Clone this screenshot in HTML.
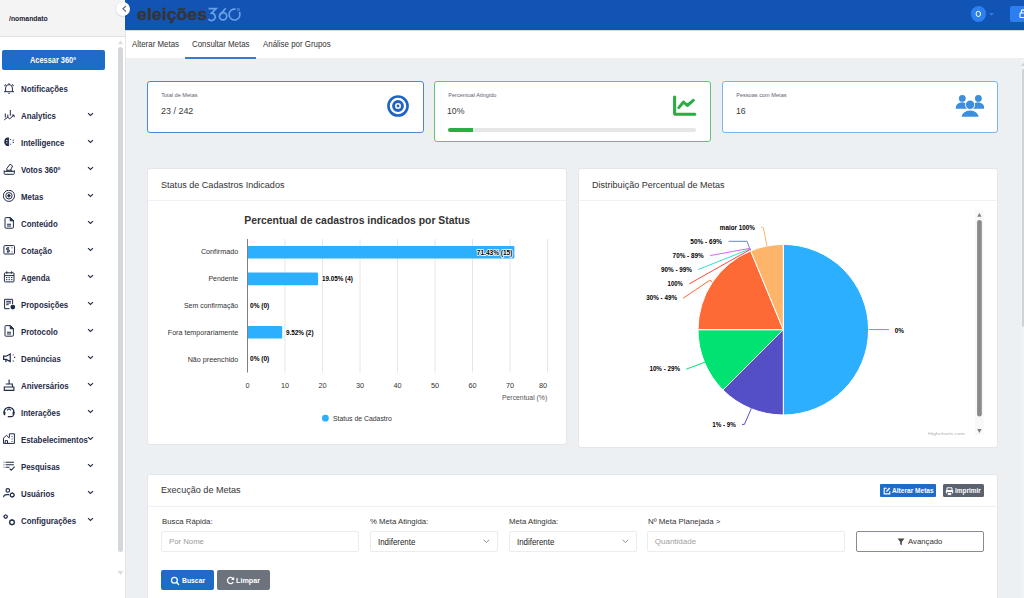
<!DOCTYPE html>
<html><head><meta charset="utf-8">
<style>
*{box-sizing:border-box;margin:0;padding:0}
html,body{width:1024px;height:598px;overflow:hidden;font-family:"Liberation Sans",sans-serif;background:#edf0f3;position:relative}
.abs{position:absolute}
.sx{display:inline-block;transform-origin:0 50%;white-space:nowrap}
#side{left:0;top:0;width:125px;height:598px;background:#fff}
#sidehead{left:0;top:0;width:125px;height:37px;background:#f4f4f4;border-bottom:1px solid #e0e0e0}
#btn360{left:2px;top:50px;width:103px;height:20px;background:#1f6bc8;border-radius:2px;color:#fff;font-size:8.5px;font-weight:bold;line-height:20px}
.mi{position:absolute;left:0;width:110px;height:14px}
.mi svg.ic{position:absolute;left:3px;top:1px}
.mi .t{position:absolute;left:21.2px;top:1.5px;font-size:8.6px;font-weight:bold;color:#1f2b47;line-height:12px}
.mi svg.ch{position:absolute;left:87px;top:4px}
#sscroll{left:118px;top:47px;width:5px;height:505px;background:#d6d7db;border-radius:2.5px}
#collapse{left:116.35px;top:2.35px;width:14px;height:14px;border-radius:50%;background:#fff;box-shadow:0 0.6px 1.5px rgba(0,0,0,.22)}
#top{left:125px;top:0;width:899px;height:30px;background:#1154b4}
#tabs{left:125px;top:30px;width:899px;height:28px;background:#fff}
.tab{position:absolute;top:7.55px;font-size:8.6px;color:#333;line-height:12px}
.card{position:absolute;background:#fff;border-radius:3px}
.kpi-l{position:absolute;left:13.2px;top:10px;font-size:5.6px;color:#5d6370}
.kpi-v{position:absolute;left:13.5px;top:22.9px;font-size:9.7px;color:#3a3a3a}
.ch-title{position:absolute;left:12.6px;top:9.5px;font-size:9.6px;color:#333;line-height:12px}
.lbl{font-size:7.8px;color:#333;position:absolute;line-height:10px}
.inp{position:absolute;background:#fff;border:1px solid #eaecef;border-radius:2px}
.fl{position:absolute;font-size:8px;color:#333;line-height:10px}
</style></head><body>
<div id="side" class="abs"></div>
<div id="sidehead" class="abs"><span class="abs sx" style="left:9.2px;top:13.6px;font-size:7.6px;font-weight:bold;color:#1f2433;line-height:10px;transform:scaleX(.9)">/nomandato</span></div>
<div id="btn360" class="abs"><span class="abs sx" style="left:27.8px;top:0;transform:scaleX(.87)">Acessar 360º</span></div>
<div id="sscroll" class="abs"></div>
<svg class="abs" style="left:117px;top:39.5px" width="7" height="6"><path d="M3.5 0.6 L6.2 4.2 L0.8 4.2Z" fill="#dcdde0"/></svg>
<svg class="abs" style="left:117px;top:570px" width="7" height="6"><path d="M3.5 5 L6.5 1 L0.5 1Z" fill="#dcdde0"/></svg>

<!-- menu -->
<div id="menu">
<div class="mi" style="top:81.3px"><svg class="ic" width="13" height="13" fill="none" stroke="#1f2b47" stroke-width="1"><path d="M2.6 9.6V6a3.4 3.4 0 0 1 6.8 0v3.6M1 9.7h10M5.2 11.3h1.6" /><path d="M1.6 4.2 2.6 2.2M10.4 4.2 9.4 2.2M6 1.2v1.2"/></svg><span class="t sx" style="transform:scaleX(.915)">Notificações</span></div>
<div class="mi" style="top:108.3px"><svg class="ic" width="13" height="13" fill="none" stroke="#1f2b47" stroke-width="1"><path d="M2.3 4.5v4M4.8 5.6v3.3M7.3 1v5.6M1.2 11l3.4-2.8 2.1 1.6 4-3.5M8.8 6.1h2.3v2.2"/></svg><span class="t sx" style="transform:scaleX(.915)">Analytics</span><svg class="ch" width="7" height="5"><path d="M1 1.2l2.5 2.3 2.5-2.3" fill="none" stroke="#1f2b47" stroke-width="1.1"/></svg></div>
<div class="mi" style="top:135.3px"><svg class="ic" width="13" height="13" fill="none" stroke="#1f2b47" stroke-width="1"><path d="M5 1.5C2.6 1.5 1.2 3.3 1.4 5.2c-.3 1.2-.1 2.6 1 3.5.3 1 1.4 1.4 2.6 1.2z" fill="#1f2b47" stroke="none"/><path d="M5.6 1.5v8.6M7.6 3v.8M7.6 7.8v.8M9.6 4.2h1.3M9.6 6.4h1.3"/><path d="M3 4.5h1.6M3 6.8h1.6" stroke="#fff" stroke-width="0.8"/></svg><span class="t sx" style="transform:scaleX(.915)">Intelligence</span><svg class="ch" width="7" height="5"><path d="M1 1.2l2.5 2.3 2.5-2.3" fill="none" stroke="#1f2b47" stroke-width="1.1"/></svg></div>
<div class="mi" style="top:162.3px"><svg class="ic" width="13" height="13" fill="none" stroke="#1f2b47" stroke-width="1"><path d="M1.2 7.3v3.2a.8.8 0 0 0 .8.8h8.5a.8.8 0 0 0 .8-.8V7.3M1.2 8.4h10.1M3.2 7.3h6.1"/><path d="M4.3 7.2 3.6 5.8 7.1 1.1 9.6 3 7.4 7.2"/></svg><span class="t sx" style="transform:scaleX(.915)">Votos 360º</span><svg class="ch" width="7" height="5"><path d="M1 1.2l2.5 2.3 2.5-2.3" fill="none" stroke="#1f2b47" stroke-width="1.1"/></svg></div>
<div class="mi" style="top:189.3px"><svg class="ic" width="13" height="13" fill="none" stroke="#1f2b47" stroke-width="1"><circle cx="5.9" cy="5.8" r="5.6"/><circle cx="5.9" cy="5.8" r="3.2"/><circle cx="5.9" cy="5.8" r="1.2" fill="#1f2b47"/></svg><span class="t sx" style="transform:scaleX(.915)">Metas</span><svg class="ch" width="7" height="5"><path d="M1 1.2l2.5 2.3 2.5-2.3" fill="none" stroke="#1f2b47" stroke-width="1.1"/></svg></div>
<div class="mi" style="top:216.3px"><svg class="ic" width="13" height="13" fill="none" stroke="#1f2b47" stroke-width="1"><path d="M2.8.6h4.6l3 3v6.8a.8.8 0 0 1-.8.8H2.8a.8.8 0 0 1-.8-.8V1.4a.8.8 0 0 1 .8-.8z"/><path d="M7.2.6v3.2h3.2z" fill="#1f2b47"/><path d="M4 7.3h4M4 9h4" stroke-width="1.1"/></svg><span class="t sx" style="transform:scaleX(.915)">Conteúdo</span><svg class="ch" width="7" height="5"><path d="M1 1.2l2.5 2.3 2.5-2.3" fill="none" stroke="#1f2b47" stroke-width="1.1"/></svg></div>
<div class="mi" style="top:243.3px"><svg class="ic" width="13" height="13" fill="none" stroke="#1f2b47" stroke-width="1"><rect x="0.9" y="1.6" width="10.6" height="8.4" rx="0.9"/><path d="M5 3.2v5.5M6.2 3.9H4.4a1 1 0 0 0 0 2h1.2a1 1 0 0 1 0 2H3.7M9 3.4v.9M9 7.4v.9"/></svg><span class="t sx" style="transform:scaleX(.915)">Cotação</span><svg class="ch" width="7" height="5"><path d="M1 1.2l2.5 2.3 2.5-2.3" fill="none" stroke="#1f2b47" stroke-width="1.1"/></svg></div>
<div class="mi" style="top:270.3px"><svg class="ic" width="13" height="13" fill="none" stroke="#1f2b47" stroke-width="1"><rect x="1.4" y="1.8" width="9.6" height="9.1" rx="0.9"/><path d="M1.4 4.6h9.6M3.8.3v2.4M8.6.3v2.4M3 6.6h1.4M5.5 6.6h1.4M8 6.6h1.4M3 8.7h1.4M5.5 8.7h1.4M8 8.7h1.4"/></svg><span class="t sx" style="transform:scaleX(.915)">Agenda</span><svg class="ch" width="7" height="5"><path d="M1 1.2l2.5 2.3 2.5-2.3" fill="none" stroke="#1f2b47" stroke-width="1.1"/></svg></div>
<div class="mi" style="top:297.3px"><svg class="ic" width="13" height="13" fill="none" stroke="#1f2b47" stroke-width="1"><path d="M9.6 6.2V1.3H1.6v9.4h5"/><path d="M3.2 3.3h4.8M3.2 5h4.8M3.2 6.7h2.5"/><circle cx="9.8" cy="9.1" r="2.4" fill="#1f2b47" stroke="none"/></svg><span class="t sx" style="transform:scaleX(.915)">Proposições</span><svg class="ch" width="7" height="5"><path d="M1 1.2l2.5 2.3 2.5-2.3" fill="none" stroke="#1f2b47" stroke-width="1.1"/></svg></div>
<div class="mi" style="top:324.3px"><svg class="ic" width="13" height="13" fill="none" stroke="#1f2b47" stroke-width="1"><path d="M2.8.6h4.6l3 3v6.8a.8.8 0 0 1-.8.8H2.8a.8.8 0 0 1-.8-.8V1.4a.8.8 0 0 1 .8-.8z"/><path d="M7.2.6v3.2h3.2z" fill="#1f2b47"/><path d="M4 7.3h4M4 9h4" stroke-width="1.1"/></svg><span class="t sx" style="transform:scaleX(.915)">Protocolo</span><svg class="ch" width="7" height="5"><path d="M1 1.2l2.5 2.3 2.5-2.3" fill="none" stroke="#1f2b47" stroke-width="1.1"/></svg></div>
<div class="mi" style="top:351.3px"><svg class="ic" width="13" height="13" fill="none" stroke="#1f2b47" stroke-width="1"><path d="M0.6 4.2h2.6l4-2.2v7.6l-4-2.2H.6z" stroke-width="1.2"/><path d="M2.6 7.4l.6 2.6M10.2 2.4v.8M10.2 8.6v.8M11 5.4h1.2" stroke-width="1.2"/></svg><span class="t sx" style="transform:scaleX(.915)">Denúncias</span><svg class="ch" width="7" height="5"><path d="M1 1.2l2.5 2.3 2.5-2.3" fill="none" stroke="#1f2b47" stroke-width="1.1"/></svg></div>
<div class="mi" style="top:378.3px"><svg class="ic" width="13" height="13" fill="none" stroke="#1f2b47" stroke-width="1"><path d="M1.3 8h9.6v3.4H1.3zM2.8 5h6.6v3M6.1 2v3" stroke-width="1.1"/><circle cx="6.1" cy="1.3" r="0.8" fill="#1f2b47" stroke="none"/></svg><span class="t sx" style="transform:scaleX(.915)">Aniversários</span><svg class="ch" width="7" height="5"><path d="M1 1.2l2.5 2.3 2.5-2.3" fill="none" stroke="#1f2b47" stroke-width="1.1"/></svg></div>
<div class="mi" style="top:405.3px"><svg class="ic" width="13" height="13" fill="none" stroke="#1f2b47" stroke-width="1"><path d="M1 7.2V6.3a5 5 0 0 1 10 0v.9" stroke-width="1.2"/><path d="M1 5.8h.9v3H1zM10.1 5.8h.9v3h-.9z" fill="#1f2b47"/><path d="M10.5 8.8c0 1.3-.8 1.8-2 1.8H4.8M4 4.2l2-1.3 2 1.3" stroke-width="1.1"/></svg><span class="t sx" style="transform:scaleX(.915)">Interações</span><svg class="ch" width="7" height="5"><path d="M1 1.2l2.5 2.3 2.5-2.3" fill="none" stroke="#1f2b47" stroke-width="1.1"/></svg></div>
<div class="mi" style="top:432.3px"><svg class="ic" width="13" height="13" fill="none" stroke="#1f2b47" stroke-width="1"><path d="M0.5 10.4V5.2L3.4 2.3 6.4 5.2M5.6 10.4H0.5M2.2 10.4V7.6h2.3v2.8M6.4 4.6V0.8h5v9.6H4.5M9 3v.9M9 5.5v.9M9 8v.9" stroke-width="1"/></svg><span class="t sx" style="transform:scaleX(.915)">Estabelecimentos</span><svg class="ch" width="7" height="5"><path d="M1 1.2l2.5 2.3 2.5-2.3" fill="none" stroke="#1f2b47" stroke-width="1.1"/></svg></div>
<div class="mi" style="top:459.3px"><svg class="ic" width="13" height="13" fill="none" stroke="#1f2b47" stroke-width="1"><path d="M0.6 2.3h.8M2.6 2.3h8.3M0.6 4.8h.8M2.6 4.8h8.3M0.6 7.3h.8M2.6 7.3h3.8M6.6 8.6l1.6 1.7 3.4-3.6" stroke-width="1.1"/></svg><span class="t sx" style="transform:scaleX(.915)">Pesquisas</span><svg class="ch" width="7" height="5"><path d="M1 1.2l2.5 2.3 2.5-2.3" fill="none" stroke="#1f2b47" stroke-width="1.1"/></svg></div>
<div class="mi" style="top:486.3px"><svg class="ic" width="13" height="13" fill="none" stroke="#1f2b47" stroke-width="1"><circle cx="4.8" cy="3.4" r="1.8" stroke-width="1.2"/><path d="M0.6 10.2c0-1.8 1.3-2.6 3.2-2.6H6" stroke-width="1.2"/><circle cx="9.2" cy="8" r="1.9" stroke-width="1.2"/><path d="M9.2 5.4v.7M9.2 9.9v.7M6.7 8h.6M11.1 8h.6" stroke-width="1"/></svg><span class="t sx" style="transform:scaleX(.915)">Usuários</span><svg class="ch" width="7" height="5"><path d="M1 1.2l2.5 2.3 2.5-2.3" fill="none" stroke="#1f2b47" stroke-width="1.1"/></svg></div>
<div class="mi" style="top:513.3px"><svg class="ic" width="13" height="13" fill="none" stroke="#1f2b47" stroke-width="1"><circle cx="2.7" cy="2.6" r="1.6" stroke-width="1.2"/><path d="M2.7 .4v.6M2.7 4.2v.6M.5 2.6h.6M4.3 2.6h.6" stroke-width="1"/><circle cx="9" cy="8.3" r="2.3" stroke-width="1.3"/><path d="M9 5.2v.8M9 10.6v.8M5.9 8.3h.8M11.3 8.3h.8M6.9 6.2l.5.5M10.6 9.9l.5.5M6.9 10.4l.5-.5M10.6 6.7l.5-.5" stroke-width="1"/></svg><span class="t sx" style="transform:scaleX(.915)">Configurações</span><svg class="ch" width="7" height="5"><path d="M1 1.2l2.5 2.3 2.5-2.3" fill="none" stroke="#1f2b47" stroke-width="1.1"/></svg></div>
</div>

<div id="top" class="abs">
  <div class="abs sx" style="left:11.6px;top:4.6px;font-size:17px;font-weight:bold;color:#353535;line-height:20px;transform:scaleX(1.045);transform-origin:0 0;-webkit-text-stroke:0.35px #353535">eleições</div>
  <svg class="abs" style="left:0;top:0" width="130" height="30" fill="none" stroke="#6aa0e8" stroke-width="1.7"><path d="M83.5 8.7H91.1L86.6 13.1A3.75 3.75 0 1 1 83.4 19"/><path d="M100.7 8.2L94.8 15.1"/><circle cx="98.1" cy="16.3" r="3.65"/><path d="M114.31 11.99A5.45 5.45 0 1 1 110.63 9.22"/><circle cx="113.4" cy="9.5" r="1.1" stroke-width="0.9"/></svg>
  <div class="abs" style="left:845.5px;top:6.3px;width:15.6px;height:15.6px;border-radius:50%;background:#2b7ff0"></div><svg class="abs" style="left:850px;top:9px" width="8" height="10"><ellipse cx="3.3" cy="4.9" rx="2.25" ry="2.65" fill="none" stroke="#fff" stroke-width="1.0"/></svg>
  <svg class="abs" style="left:864px;top:12.8px" width="6" height="4"><path d="M0 0H5L2.5 2.8Z" fill="#2b7ff0"/></svg>
  <div class="abs" style="left:885px;top:6px;width:20px;height:16px;border-radius:2px;background:#2b7ff0"></div>
  <svg class="abs" style="left:894px;top:9px" width="8" height="9"><rect x="1" y="4" width="6" height="4.5" rx="0.8" fill="none" stroke="#fff" stroke-width="1.1"/><path d="M2.3 4V2.6a1.7 1.7 0 0 1 3.4 0V4" fill="none" stroke="#fff" stroke-width="1.1"/></svg>
</div>
<div id="collapse" class="abs"><svg class="abs" style="left:0;top:0" width="14" height="14"><path d="M10 4 L6.9 6.8 L10 9.6" fill="none" stroke="#626b7a" stroke-width="1.15"/></svg></div>
<div id="tabs" class="abs">
  <div class="tab sx" style="left:6.5px;transform:scaleX(.92)">Alterar Metas</div>
  <div class="tab sx" style="left:67px;transform:scaleX(.92)">Consultar Metas</div>
  <div class="tab sx" style="left:137.5px;transform:scaleX(.92)">Análise por Grupos</div>
  <div class="abs" style="left:60px;top:27.3px;width:71px;height:1.5px;background:#3b7ad0"></div>
  <div class="abs" style="left:0;top:0;width:899px;height:1px;background:#d3d9e3"></div>
</div>
<div class="abs" style="left:125px;top:30px;width:1px;height:568px;background:#e3e4e7"></div>
<div class="abs" style="left:1021px;top:58px;width:3px;height:540px;background:#f0f2f4"></div>
<div class="abs" style="left:1022px;top:69px;width:4px;height:257.5px;background:#cfd1d6;border-radius:2px"></div>
<svg class="abs" style="left:1020px;top:62px" width="4" height="5"><path d="M3.5 0.8L6 4H1Z" fill="#cfd1d6"/></svg>

<!-- KPI cards -->
<div class="card" style="left:147px;top:81px;width:277px;height:52px;border:1px solid #4d87d1">
  <div class="kpi-l">Total de Metas</div>
  <div class="kpi-v sx" style="left:13px;transform:scaleX(.924)">23 / 242</div>
  <svg class="abs" style="left:238px;top:12px" width="24" height="24"><circle cx="12" cy="12" r="9.55" fill="none" stroke="#1f64c4" stroke-width="2.6"/><circle cx="12" cy="12" r="4.45" fill="none" stroke="#1f64c4" stroke-width="2.9"/><circle cx="12" cy="12" r="1.4" fill="#1f64c4"/></svg>
</div>
<div class="card" style="left:434px;top:81px;width:277px;height:61px;border:1px solid #62c571">
  <div class="kpi-l">Percentual Atingido</div>
  <div class="kpi-v sx" style="left:12.3px;transform:scaleX(.9)">10%</div>
  <svg class="abs" style="left:236px;top:12px" width="27" height="25"><path d="M3.6 3 V19.3 a1 1 0 0 0 1 1 H23.8" fill="none" stroke="#2aae43" stroke-width="3.1" stroke-linecap="round" stroke-linejoin="round"/><path d="M7.8 13.6 L12.5 8 L16.3 11.5 L22.3 6.3" fill="none" stroke="#2aae43" stroke-width="3" stroke-linecap="round" stroke-linejoin="round"/></svg>
  <div class="abs" style="left:13px;top:45.5px;width:248px;height:4px;border-radius:2px;background:#e5e6e8;overflow:hidden"><div style="width:25px;height:4px;background:#2aae43"></div></div>
</div>
<div class="card" style="left:722px;top:81px;width:276px;height:52px;border:1px solid #7db4e8">
  <div class="kpi-l">Pessoas com Metas</div>
  <div class="kpi-v sx" style="left:12.8px;transform:scaleX(.9)">16</div>
  <svg class="abs" style="left:229px;top:9px" width="32" height="28"><g fill="#3d8fdd"><circle cx="10.3" cy="7.4" r="3.4"/><circle cx="26.4" cy="7.4" r="3.4"/><path d="M3.9 17.8 a6.3 5.5 0 0 1 10.5 -5 L15 17.8Z"/><path d="M32.1 17.8 a6.3 5.5 0 0 0 -10.5 -5 L21 17.8Z"/><circle cx="18.1" cy="13.8" r="5" fill="#fff"/><circle cx="18.1" cy="13.8" r="4.2"/><path d="M9 26.3 a9.1 7.5 0 0 1 18.2 0Z" stroke="#fff" stroke-width="1.2"/></g></svg>
</div>

<!-- chart cards -->
<div class="card" style="left:147px;top:168px;width:420px;height:277px;border:1px solid #e4e6ea">
  <div class="ch-title sx" style="transform:scaleX(.945)">Status de Cadastros Indicados</div>
  <div class="abs" style="left:0;top:31px;width:418px;height:1px;background:#eff1f3"></div>
</div>
<div class="card" style="left:578px;top:168px;width:420px;height:280px;border:1px solid #e4e6ea">
  <div class="ch-title sx" style="transform:scaleX(.942)">Distribuição Percentual de Metas</div>
  <div class="abs" style="left:0;top:31px;width:418px;height:1px;background:#eff1f3"></div>
</div>

<!--CHARTS-->
<svg class="abs" style="left:0;top:0" width="1024" height="598" font-family="Liberation Sans, sans-serif">
<text x="357.2" y="220.9" font-size="10.4" font-weight="bold" fill="#333333" text-anchor="middle" dominant-baseline="central" textLength="225.8" lengthAdjust="spacingAndGlyphs">Percentual de cadastros indicados por Status</text>
<line x1="285.0" y1="239" x2="285.0" y2="372.5" stroke="#e6e6e6" stroke-width="1"/>
<line x1="322.5" y1="239" x2="322.5" y2="372.5" stroke="#e6e6e6" stroke-width="1"/>
<line x1="360.0" y1="239" x2="360.0" y2="372.5" stroke="#e6e6e6" stroke-width="1"/>
<line x1="397.5" y1="239" x2="397.5" y2="372.5" stroke="#e6e6e6" stroke-width="1"/>
<line x1="435.0" y1="239" x2="435.0" y2="372.5" stroke="#e6e6e6" stroke-width="1"/>
<line x1="472.5" y1="239" x2="472.5" y2="372.5" stroke="#e6e6e6" stroke-width="1"/>
<line x1="510.0" y1="239" x2="510.0" y2="372.5" stroke="#e6e6e6" stroke-width="1"/>
<line x1="547.5" y1="239" x2="547.5" y2="372.5" stroke="#e6e6e6" stroke-width="1"/>
<path d="M247.5 245.9H513.1999999999999a1.2 1.2 0 0 1 1.2 1.2V257.3a1.2 1.2 0 0 1 -1.2 1.2H247.5Z" fill="#2caffe"/>
<text x="238.2" y="251.20000000000002" font-size="7.5" font-weight="normal" fill="#333333" text-anchor="end" dominant-baseline="central" textLength="37.3" lengthAdjust="spacingAndGlyphs">Confirmado</text>
<text x="512.4" y="252.50000000000003" font-size="6.6" font-weight="bold" fill="#000000" text-anchor="end" dominant-baseline="central" textLength="35.6" lengthAdjust="spacingAndGlyphs" stroke="#ffffff" stroke-width="1.6" paint-order="stroke" stroke-linejoin="round">71.43% (15)</text>
<path d="M247.5 272.6H316.90000000000003a1.2 1.2 0 0 1 1.2 1.2V284.00000000000006a1.2 1.2 0 0 1 -1.2 1.2H247.5Z" fill="#2caffe"/>
<text x="238.2" y="278.90000000000003" font-size="7.5" font-weight="normal" fill="#333333" text-anchor="end" dominant-baseline="central" textLength="29.8" lengthAdjust="spacingAndGlyphs">Pendente</text>
<text x="321.90000000000003" y="278.70000000000005" font-size="6.6" font-weight="bold" fill="#000000" text-anchor="start" dominant-baseline="central" textLength="30.9" lengthAdjust="spacingAndGlyphs" stroke="#ffffff" stroke-width="1.6" paint-order="stroke" stroke-linejoin="round">19.05% (4)</text>
<text x="238.2" y="305.6" font-size="7.5" font-weight="normal" fill="#333333" text-anchor="end" dominant-baseline="central" textLength="54.3" lengthAdjust="spacingAndGlyphs">Sem confirmação</text>
<text x="250" y="305.40000000000003" font-size="6.6" font-weight="bold" fill="#000000" text-anchor="start" dominant-baseline="central" textLength="19.3" lengthAdjust="spacingAndGlyphs" stroke="#ffffff" stroke-width="1.6" paint-order="stroke" stroke-linejoin="round">0% (0)</text>
<path d="M247.5 326.0H281.0a1.2 1.2 0 0 1 1.2 1.2V337.40000000000003a1.2 1.2 0 0 1 -1.2 1.2H247.5Z" fill="#2caffe"/>
<text x="238.2" y="332.3" font-size="7.5" font-weight="normal" fill="#333333" text-anchor="end" dominant-baseline="central" textLength="70.4" lengthAdjust="spacingAndGlyphs">Fora temporariamente</text>
<text x="286.0" y="332.1" font-size="6.6" font-weight="bold" fill="#000000" text-anchor="start" dominant-baseline="central" textLength="27.5" lengthAdjust="spacingAndGlyphs" stroke="#ffffff" stroke-width="1.6" paint-order="stroke" stroke-linejoin="round">9.52% (2)</text>
<text x="238.2" y="359.0" font-size="7.5" font-weight="normal" fill="#333333" text-anchor="end" dominant-baseline="central" textLength="50.5" lengthAdjust="spacingAndGlyphs">Não preenchido</text>
<text x="250" y="358.8" font-size="6.6" font-weight="bold" fill="#000000" text-anchor="start" dominant-baseline="central" textLength="19.3" lengthAdjust="spacingAndGlyphs" stroke="#ffffff" stroke-width="1.6" paint-order="stroke" stroke-linejoin="round">0% (0)</text>
<line x1="247.5" y1="239" x2="247.5" y2="372.5" stroke="#808080" stroke-width="1"/>
<text x="247.5" y="385.3" font-size="7.3" font-weight="normal" fill="#333333" text-anchor="middle" dominant-baseline="central">0</text>
<text x="285.0" y="385.3" font-size="7.3" font-weight="normal" fill="#333333" text-anchor="middle" dominant-baseline="central">10</text>
<text x="322.5" y="385.3" font-size="7.3" font-weight="normal" fill="#333333" text-anchor="middle" dominant-baseline="central">20</text>
<text x="360.0" y="385.3" font-size="7.3" font-weight="normal" fill="#333333" text-anchor="middle" dominant-baseline="central">30</text>
<text x="397.5" y="385.3" font-size="7.3" font-weight="normal" fill="#333333" text-anchor="middle" dominant-baseline="central">40</text>
<text x="435.0" y="385.3" font-size="7.3" font-weight="normal" fill="#333333" text-anchor="middle" dominant-baseline="central">50</text>
<text x="472.5" y="385.3" font-size="7.3" font-weight="normal" fill="#333333" text-anchor="middle" dominant-baseline="central">60</text>
<text x="510.0" y="385.3" font-size="7.3" font-weight="normal" fill="#333333" text-anchor="middle" dominant-baseline="central">70</text>
<text x="543" y="385.3" font-size="7.3" font-weight="normal" fill="#333333" text-anchor="middle" dominant-baseline="central">80</text>
<text x="547.2" y="397.8" font-size="7.3" font-weight="normal" fill="#555555" text-anchor="end" dominant-baseline="central" textLength="45.2" lengthAdjust="spacingAndGlyphs">Percentual (%)</text>
<circle cx="325.4" cy="418.2" r="3.4" fill="#2caffe"/>
<text x="333" y="418.3" font-size="7.3" font-weight="normal" fill="#333333" text-anchor="start" dominant-baseline="central" textLength="58.9" lengthAdjust="spacingAndGlyphs">Status de Cadastro</text>
<path d="M783.3 329.7L783.30 244.40A85.3 85.3 0 0 1 783.30 415.00Z" fill="#2caffe" stroke="#ffffff" stroke-width="1" stroke-linejoin="round"/>
<path d="M783.3 329.7L783.30 415.00A85.3 85.3 0 0 1 722.98 390.02Z" fill="#544fc5" stroke="#ffffff" stroke-width="1" stroke-linejoin="round"/>
<path d="M783.3 329.7L722.98 390.02A85.3 85.3 0 0 1 698.00 329.70Z" fill="#00e272" stroke="#ffffff" stroke-width="1" stroke-linejoin="round"/>
<path d="M783.3 329.7L698.00 329.70A85.3 85.3 0 0 1 750.66 250.89Z" fill="#fe6a35" stroke="#ffffff" stroke-width="1" stroke-linejoin="round"/>
<path d="M783.3 329.7L750.66 250.89A85.3 85.3 0 0 1 783.30 244.40Z" fill="#feb56a" stroke="#ffffff" stroke-width="1" stroke-linejoin="round"/>
<path d="M868.8 329.6 L888.9 329.6" fill="none" stroke="#2caffe" stroke-width="1"/>
<path d="M742 424.4 L744.4 424.4 L751.4 408.3" fill="none" stroke="#544fc5" stroke-width="1"/>
<path d="M686.2 369.2 L705.2 362.1" fill="none" stroke="#00e272" stroke-width="1"/>
<path d="M683.1 298.2 L709.7 280.3 L712 281.6" fill="none" stroke="#fe6a35" stroke-width="1"/>
<path d="M728.6 241.3 L747 241.3 L750.5 250.6" fill="none" stroke="#6b8abc" stroke-width="1"/>
<path d="M710.1 255.6 L750.2 248.3" fill="none" stroke="#d568fb" stroke-width="1"/>
<path d="M698.2 269.5 L750.4 248.8" fill="none" stroke="#2ee0ca" stroke-width="1"/>
<path d="M689.2 283.9 L750.5 249.3" fill="none" stroke="#fa4b42" stroke-width="1"/>
<path d="M761.1 227.1 L763.3 227.7 L767 246.2" fill="none" stroke="#feb56a" stroke-width="1"/>
<text x="894.7" y="330" font-size="6.8" font-weight="bold" fill="#000" text-anchor="start" dominant-baseline="central" textLength="9.2" lengthAdjust="spacingAndGlyphs" stroke="#ffffff" stroke-width="1.4" paint-order="stroke" stroke-linejoin="round">0%</text>
<text x="712.2" y="424.6" font-size="6.8" font-weight="bold" fill="#000" text-anchor="start" dominant-baseline="central" textLength="23.7" lengthAdjust="spacingAndGlyphs" stroke="#ffffff" stroke-width="1.4" paint-order="stroke" stroke-linejoin="round">1% - 9%</text>
<text x="649.4" y="368.8" font-size="6.8" font-weight="bold" fill="#000" text-anchor="start" dominant-baseline="central" textLength="30.7" lengthAdjust="spacingAndGlyphs" stroke="#ffffff" stroke-width="1.4" paint-order="stroke" stroke-linejoin="round">10% - 29%</text>
<text x="646.2" y="297.9" font-size="6.8" font-weight="bold" fill="#000" text-anchor="start" dominant-baseline="central" textLength="30.9" lengthAdjust="spacingAndGlyphs" stroke="#ffffff" stroke-width="1.4" paint-order="stroke" stroke-linejoin="round">30% - 49%</text>
<text x="667.6" y="283.8" font-size="6.8" font-weight="bold" fill="#000" text-anchor="start" dominant-baseline="central" textLength="15.3" lengthAdjust="spacingAndGlyphs" stroke="#ffffff" stroke-width="1.4" paint-order="stroke" stroke-linejoin="round">100%</text>
<text x="660.9" y="269.8" font-size="6.8" font-weight="bold" fill="#000" text-anchor="start" dominant-baseline="central" textLength="31.1" lengthAdjust="spacingAndGlyphs" stroke="#ffffff" stroke-width="1.4" paint-order="stroke" stroke-linejoin="round">90% - 99%</text>
<text x="672.6" y="255.7" font-size="6.8" font-weight="bold" fill="#000" text-anchor="start" dominant-baseline="central" textLength="31.1" lengthAdjust="spacingAndGlyphs" stroke="#ffffff" stroke-width="1.4" paint-order="stroke" stroke-linejoin="round">70% - 89%</text>
<text x="690.3" y="241.6" font-size="6.8" font-weight="bold" fill="#000" text-anchor="start" dominant-baseline="central" textLength="31.7" lengthAdjust="spacingAndGlyphs" stroke="#ffffff" stroke-width="1.4" paint-order="stroke" stroke-linejoin="round">50% - 69%</text>
<text x="719.8" y="227.9" font-size="6.8" font-weight="bold" fill="#000" text-anchor="start" dominant-baseline="central" textLength="35.1" lengthAdjust="spacingAndGlyphs" stroke="#ffffff" stroke-width="1.4" paint-order="stroke" stroke-linejoin="round">maior 100%</text>
<rect x="975.2" y="209.8" width="8.3" height="225" fill="#f8f8f8"/>
<path d="M979.4 212.9L981.6 216.8H977.2Z" fill="#808080"/>
<rect x="977.1" y="220" width="4.7" height="196.6" rx="2.35" fill="#8a8a8a"/>
<path d="M979.4 433L981.6 429.1H977.2Z" fill="#808080"/>
<text x="946.4" y="434.3" font-size="3.0" font-weight="normal" fill="#b0b0b0" text-anchor="middle" dominant-baseline="central" textLength="37" lengthAdjust="spacingAndGlyphs">Highcharts.com</text>
</svg>
<!--/CHARTS-->
<!-- bottom card -->
<div class="card" style="left:147px;top:474px;width:851px;height:130px;border:1px solid #e4e6ea">
  <div class="ch-title sx" style="top:9.4px;transform:scaleX(.945)">Execução de Metas</div>
  <div class="abs" style="left:0;top:31px;width:849px;height:1px;background:#eff1f3"></div>
</div>
<!-- form -->
<div class="abs" style="left:880px;top:484px;width:56px;height:13px;background:#1f6bc8;border-radius:1px"></div>
<svg class="abs" style="left:883px;top:487px" width="8" height="8"><path d="M3.8 1.3H1.2v5.6h5.6V4.2" fill="none" stroke="#fff" stroke-width="1.1"/><path d="M3 4.9L3.4 3.5 6.3 0.6 7.3 1.6 4.4 4.5Z" fill="#fff"/></svg>
<div class="abs sx" style="left:891.8px;top:486.3px;font-size:7px;font-weight:bold;color:#fff;line-height:10px;transform:scaleX(.94)">Alterar Metas</div>
<div class="abs" style="left:943px;top:484px;width:41px;height:13px;background:#5a6270;border-radius:1.5px"></div>
<svg class="abs" style="left:945px;top:486.8px" width="9" height="9"><path d="M2 3V0.8h5V3" fill="none" stroke="#fff" stroke-width="1"/><rect x="0.8" y="3" width="7.4" height="3.6" rx="0.8" fill="#fff"/><rect x="2.3" y="5.5" width="4.4" height="2.8" fill="#fff" stroke="#5a6270" stroke-width="0.8"/></svg>
<div class="abs sx" style="left:954.7px;top:486.3px;font-size:7px;font-weight:bold;color:#fff;line-height:10px;transform:scaleX(.92)">Imprimir</div>

<div class="fl sx" style="left:161.7px;top:517px;transform:scaleX(.972)">Busca Rápida:</div>
<div class="inp" style="left:161px;top:531px;width:198px;height:21px"></div>
<div class="fl sx" style="left:168.8px;top:537px;color:#9a9a9a;transform:scaleX(.97)">Por Nome</div>

<div class="fl sx" style="left:369.7px;top:517px;transform:scaleX(.969)">% Meta Atingida:</div>
<div class="inp" style="left:370px;top:531px;width:128px;height:21px"></div>
<div class="fl sx" style="left:377.6px;top:537px;font-size:8.6px;color:#222;transform:scaleX(.92)">Indiferente</div>
<svg class="abs" style="left:483px;top:539px" width="7" height="5"><path d="M0.6 0.8L3.4 3.5 6.2 0.8" fill="none" stroke="#777" stroke-width="0.8"/></svg>

<div class="fl sx" style="left:508.8px;top:517px;transform:scaleX(.97)">Meta Atingida:</div>
<div class="inp" style="left:509px;top:531px;width:128px;height:21px"></div>
<div class="fl sx" style="left:516.7px;top:537px;font-size:8.6px;color:#222;transform:scaleX(.92)">Indiferente</div>
<svg class="abs" style="left:622px;top:539px" width="7" height="5"><path d="M0.6 0.8L3.4 3.5 6.2 0.8" fill="none" stroke="#777" stroke-width="0.8"/></svg>

<div class="fl sx" style="left:647.7px;top:517px;transform:scaleX(.986)">Nº Meta Planejada &gt;</div>
<div class="inp" style="left:647px;top:531px;width:198px;height:21px"></div>
<div class="fl sx" style="left:654.8px;top:537px;color:#a0a0a0;transform:scaleX(1)">Quantidade</div>

<div class="abs" style="left:856px;top:531px;width:128px;height:21px;border:1px solid #858c94;border-radius:2px;background:#fff"></div>
<svg class="abs" style="left:897px;top:537.5px" width="8" height="8"><path d="M0.5 0.5H7.5L4.8 3.8V7.3L3.2 6.3V3.8Z" fill="#444"/></svg>
<div class="fl sx" style="left:907.9px;top:537px;color:#333;transform:scaleX(.97)">Avançado</div>

<div class="abs" style="left:161px;top:570px;width:53px;height:20px;background:#1f6bc8;border-radius:2px"></div>
<svg class="abs" style="left:170px;top:575.5px" width="10" height="10"><circle cx="4.4" cy="4.2" r="2.9" fill="none" stroke="#fff" stroke-width="1.25"/><path d="M6.5 6.3L8.6 8.4" stroke="#fff" stroke-width="1.4" stroke-linecap="round"/></svg>
<div class="fl sx" style="left:181.5px;top:575.6px;color:#fff;font-weight:bold;transform:scaleX(.85)">Buscar</div>
<div class="abs" style="left:216.5px;top:570px;width:53.3px;height:20px;background:#6c737d;border-radius:2px"></div>
<svg class="abs" style="left:225.5px;top:576px" width="10" height="10"><path d="M7 2.6A3.1 3.1 0 1 0 7.3 6" fill="none" stroke="#fff" stroke-width="1.3"/><path d="M8.2 0.8V3.9H5.1Z" fill="#fff"/></svg>
<div class="fl sx" style="left:236.4px;top:575.6px;color:#fff;font-weight:bold;transform:scaleX(.9)">Limpar</div>

</body></html>
